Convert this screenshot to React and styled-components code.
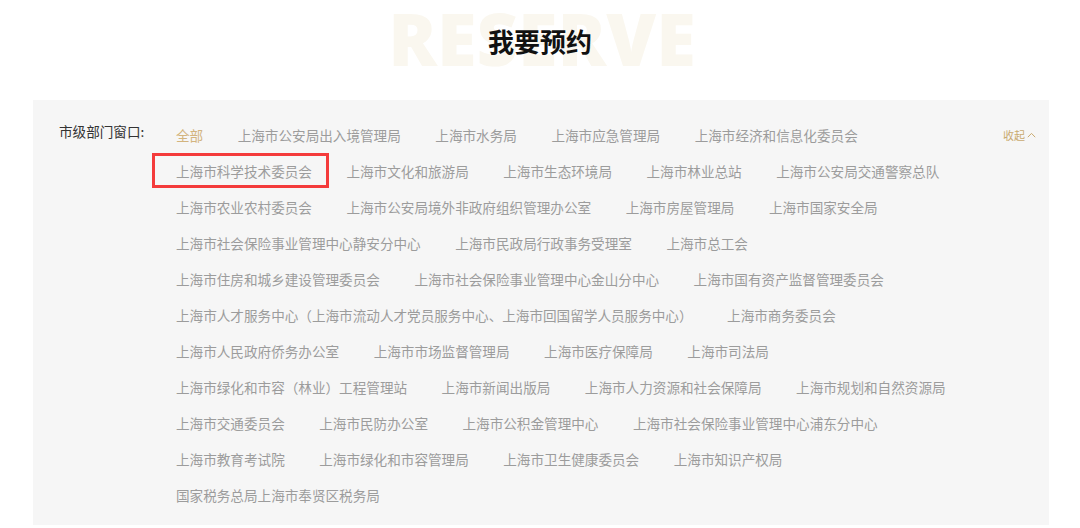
import React from "react";
import styled, { createGlobalStyle } from "styled-components";

const Global = createGlobalStyle`
  html, body { margin: 0; padding: 0; background: #ffffff; }
  body { font-family: "Noto Sans CJK SC", "Noto Sans", sans-serif; }
  * { box-sizing: border-box; }
`;

const Page = styled.div`
  width: 1080px;
  height: 528px;
  overflow: hidden;
  background: #fff;
`;

const Header = styled.header`
  position: relative;
  height: 100px;
  display: flex;
  justify-content: center;
  padding-top: 24px;
`;

const BgWord = styled.div`
  position: absolute;
  left: 0;
  right: 0;
  top: 2px;
  text-align: center;
  padding-left: 4px;
  font-family: "Open Sans", "Liberation Sans", sans-serif;
  font-weight: 800;
  font-size: 72px;
  line-height: 73px;
  color: #faf7ef;
  user-select: none;
`;

const Title = styled.h1`
  position: relative;
  margin: 0;
  font-size: 26px;
  line-height: 34px;
  font-weight: 700;
  color: #111;
  font-family: "Noto Sans CJK SC", sans-serif;
`;

const Panel = styled.section`
  width: 1016px;
  margin-left: 33px;
  background: #f6f6f6;
  padding: 17px 13px 12px 26px;
  display: grid;
  grid-template-columns: 117px 789px 1fr;
  align-items: start;
`;

const Label = styled.div`
  font-size: 13.6px;
  line-height: 28px;
  color: #333;
  white-space: nowrap;
`;

const Items = styled.div`
  display: flex;
  flex-wrap: wrap;
  column-gap: 34.5px;
`;

const Item = styled.span`
  position: relative;
  font-size: 13.6px;
  line-height: 36px;
  white-space: nowrap;
  color: ${(p) => (p.$active ? "#d3b47e" : "#9c9c9c")};
  cursor: pointer;

  ${(p) =>
    p.$marked &&
    `
    &::after {
      content: "";
      position: absolute;
      left: -24px;
      right: -17px;
      top: 0;
      bottom: 1px;
      border: 3px solid #f43b3b;
      pointer-events: none;
    }
  `}
`;

const Toggle = styled.span`
  justify-self: end;
  display: flex;
  align-items: center;
  gap: 2px;
  font-size: 11px;
  line-height: 36px;
  color: #c9aa70;
  cursor: pointer;
`;

const Caret = styled.svg`
  width: 9px;
  height: 6px;
  margin-top: -1px;
`;

const items = [
  "全部",
  "上海市公安局出入境管理局",
  "上海市水务局",
  "上海市应急管理局",
  "上海市经济和信息化委员会",
  "上海市科学技术委员会",
  "上海市文化和旅游局",
  "上海市生态环境局",
  "上海市林业总站",
  "上海市公安局交通警察总队",
  "上海市农业农村委员会",
  "上海市公安局境外非政府组织管理办公室",
  "上海市房屋管理局",
  "上海市国家安全局",
  "上海市社会保险事业管理中心静安分中心",
  "上海市民政局行政事务受理室",
  "上海市总工会",
  "上海市住房和城乡建设管理委员会",
  "上海市社会保险事业管理中心金山分中心",
  "上海市国有资产监督管理委员会",
  "上海市人才服务中心（上海市流动人才党员服务中心、上海市回国留学人员服务中心）",
  "上海市商务委员会",
  "上海市人民政府侨务办公室",
  "上海市市场监督管理局",
  "上海市医疗保障局",
  "上海市司法局",
  "上海市绿化和市容（林业）工程管理站",
  "上海市新闻出版局",
  "上海市人力资源和社会保障局",
  "上海市规划和自然资源局",
  "上海市交通委员会",
  "上海市民防办公室",
  "上海市公积金管理中心",
  "上海市社会保险事业管理中心浦东分中心",
  "上海市教育考试院",
  "上海市绿化和市容管理局",
  "上海市卫生健康委员会",
  "上海市知识产权局",
  "国家税务总局上海市奉贤区税务局",
];

export default function App() {
  return (
    <Page>
      <Global />
      <Header>
        <BgWord aria-hidden="true">RESERVE</BgWord>
        <Title>我要预约</Title>
      </Header>
      <Panel>
        <Label>市级部门窗口:</Label>
        <Items>
          {items.map((t, i) => (
            <Item key={t} $active={i === 0} $marked={t === "上海市科学技术委员会"}>
              {t}
            </Item>
          ))}
        </Items>
        <Toggle>
          收起
          <Caret viewBox="0 0 9 6">
            <path d="M0.8 5.2 L4.5 1.4 L8.2 5.2" fill="none" stroke="#c9aa70" strokeWidth="1" />
          </Caret>
        </Toggle>
      </Panel>
    </Page>
  );
}
